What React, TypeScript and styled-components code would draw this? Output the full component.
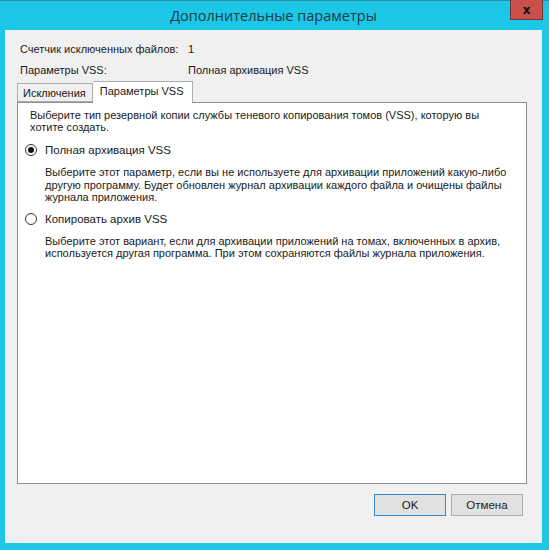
import styled, { createGlobalStyle } from "styled-components";

const Global = createGlobalStyle`
  html, body {
    margin: 0;
    padding: 0;
    background: #1bc6e6;
  }
  body {
    font-family: "Liberation Sans", Arial, sans-serif;
  }
`;

const Window = styled.div`
  width: 549px;
  height: 550px;
  box-sizing: border-box;
  background: #1bc6e6;
  border-top: 1px solid #2b8ea6;
  padding: 0 7px 7px 5px;
  display: flex;
  flex-direction: column;
`;

const TitleBar = styled.div`
  position: relative;
  height: 29px;
  display: flex;
  align-items: center;
  justify-content: center;
  font-family: "Open Sans", "Liberation Sans", sans-serif;
  font-size: 14.5px;
  color: #1d3b48;
`;

const CloseBtn = styled.div`
  position: absolute;
  top: -1px;
  right: -1px;
  width: 33px;
  height: 20px;
  box-sizing: border-box;
  background: #c9504b;
  border: 1px solid #6e3a36;
  border-top: none;
  display: flex;
  align-items: center;
  justify-content: center;
  font-family: "DejaVu Sans", sans-serif;
  font-weight: bold;
  font-size: 12px;
  color: #111;
`;

const Client = styled.div`
  flex: 1;
  background: #f0f0f0;
  border-left: 1px solid #f8fbfc;
  display: flex;
  flex-direction: column;
  font-size: 11px;
  color: #1a1a1a;
`;

const InfoGrid = styled.div`
  display: grid;
  grid-template-columns: 168px auto;
  grid-auto-rows: 21px;
  align-items: center;
  padding: 8px 0 0 14px;
`;

const Tabs = styled.div`
  display: flex;
  align-items: flex-end;
  margin: 0 0 0 11px;
  height: 22px;
  position: relative;
  z-index: 1;
`;

const Tab = styled.div<{ $active?: boolean }>`
  box-sizing: border-box;
  height: ${(p) => (p.$active ? 22 : 19)}px;
  padding: ${(p) => (p.$active ? "0 8px 0 7px" : "0 6px 0 5px")};
  display: flex;
  align-items: ${(p) => (p.$active ? "flex-start" : "center")};
  padding-top: ${(p) => (p.$active ? 3 : 1)}px;
  background: ${(p) => (p.$active ? "#fff" : "#f0f0f0")};
  border: 1px solid #adadad;
  border-bottom: ${(p) => (p.$active ? "none" : "1px solid #adadad")};
  border-left: ${(p) => (p.$active ? "none" : "1px solid #adadad")};
  margin-bottom: ${(p) => (p.$active ? -1 : 0)}px;
  font-size: 11px;
`;

const Panel = styled.div`
  box-sizing: border-box;
  margin-left: 11px;
  width: 510px;
  height: 382px;
  background: #fff;
  border: 1px solid #8f8f8f;
  padding: 6px 12px 0 12px;
`;

const Para = styled.p`
  margin: 0;
  line-height: 12px;
  font-size: 11px;
`;

const Option = styled.div<{ $gap: number }>`
  display: flex;
  align-items: center;
  gap: 8px;
  height: 14px;
  margin-top: ${(p) => p.$gap}px;
  font-size: 11.5px;
`;

const Radio = styled.span<{ $checked?: boolean }>`
  width: 12px;
  height: 12px;
  box-sizing: border-box;
  border-radius: 50%;
  border: 1px solid #333;
  background: #fff;
  display: flex;
  align-items: center;
  justify-content: center;
  margin-left: -5px;
  &::after {
    content: "";
    width: 6px;
    height: 6px;
    border-radius: 50%;
    background: ${(p) => (p.$checked ? "#111" : "transparent")};
  }
`;

const Desc = styled(Para)`
  margin: 9px 0 0 15px;
  line-height: 12.5px;
`;

const Footer = styled.div`
  display: flex;
  justify-content: flex-end;
  gap: 5px;
  padding: 10px 19px 0 0;
`;

const Button = styled.button<{ $default?: boolean }>`
  width: 72px;
  height: 22px;
  background: #e1e1e1;
  border: 1px solid ${(p) => (p.$default ? "#3b86c4" : "#adadad")};
  font-family: "Liberation Sans", Arial, sans-serif;
  font-size: 11.5px;
  color: #1a1a1a;
  padding: 0;
`;

export default function App() {
  return (
    <>
      <Global />
      <Window>
        <TitleBar>
          Дополнительные параметры
          <CloseBtn>x</CloseBtn>
        </TitleBar>
        <Client>
          <InfoGrid>
            <span>Счетчик исключенных файлов:</span>
            <span>1</span>
            <span>Параметры VSS:</span>
            <span>Полная архивация VSS</span>
          </InfoGrid>
          <Tabs>
            <Tab>Исключения</Tab>
            <Tab $active>Параметры VSS</Tab>
          </Tabs>
          <Panel>
            <Para>
              Выберите тип резервной копии службы теневого копирования томов (VSS), которую вы
              <br />
              хотите создать.
            </Para>
            <Option $gap={10}>
              <Radio $checked />
              Полная архивация VSS
            </Option>
            <Desc>
              Выберите этот параметр, если вы не используете для архивации приложений какую-либо
              <br />
              другую программу. Будет обновлен журнал архивации каждого файла и очищены файлы
              <br />
              журнала приложения.
            </Desc>
            <Option $gap={8}>
              <Radio />
              Копировать архив VSS
            </Option>
            <Desc>
              Выберите этот вариант, если для архивации приложений на томах, включенных в архив,
              <br />
              используется другая программа. При этом сохраняются файлы журнала приложения.
            </Desc>
          </Panel>
          <Footer>
            <Button $default>OK</Button>
            <Button>Отмена</Button>
          </Footer>
        </Client>
      </Window>
    </>
  );
}
